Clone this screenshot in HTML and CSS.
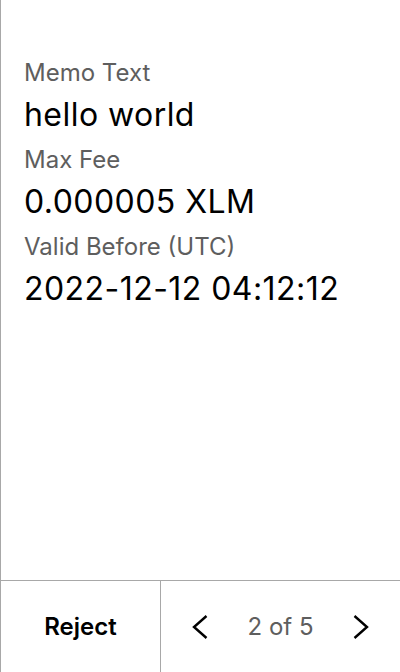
FILE: index.html
```html
<!DOCTYPE html>
<html>
<head>
<meta charset="utf-8">
<link rel="stylesheet" href="styles.css">
</head>
<body>
<div class="screen">
  <div class="content">
    <div class="label">Memo Text</div>
    <div class="value">hello world</div>
    <div class="label">Max Fee</div>
    <div class="value">0.000005 XLM</div>
    <div class="label">Valid Before (UTC)</div>
    <div class="value">2022-12-12 04:12:12</div>
  </div>
  <div class="footer">
    <div class="reject">Reject</div>
    <div class="nav">
      <svg class="chev" width="16" height="24" viewBox="0 0 16 24"><path d="M14.5 1 L2 12 L14.5 23" fill="none" stroke="#000" stroke-width="2.4"/></svg>
      <span class="page">2 of 5</span>
      <svg class="chev" width="16" height="24" viewBox="0 0 16 24"><path d="M1.5 1 L14 12 L1.5 23" fill="none" stroke="#000" stroke-width="2.4"/></svg>
    </div>
  </div>
</div>
</body>
</html>
```
FILE: styles.css
```css
html, body { margin: 0; padding: 0; background: #fff; }
body { font-family: Inter, "Noto Sans", sans-serif; color: #000; }
.screen {
  width: 400px; height: 672px; box-sizing: border-box;
  border-left: 1px solid #a8a8a8;
  display: flex; flex-direction: column;
}
.content { flex: 1; padding: 55px 23px 0; display: flex; flex-direction: column; }
.label { font-size: 24px; line-height: 36px; color: #5e5e5e; }
.value { font-size: 32px; line-height: 48px; margin-bottom: 3px; font-weight: 400; letter-spacing: 0.45px; white-space: nowrap; }
.footer {
  height: 91px; border-top: 1px solid #a8a8a8;
  display: flex;
}
.reject {
  width: 159px; border-right: 1px solid #a8a8a8;
  display: flex; align-items: center; justify-content: center;
  font-size: 24px; font-weight: 600;
}
.nav { flex: 1; display: flex; align-items: center; justify-content: space-between; padding: 0 31px 0 31px; }
.page { font-size: 24px; color: #5e5e5e; }
.chev { display: block; }
```
